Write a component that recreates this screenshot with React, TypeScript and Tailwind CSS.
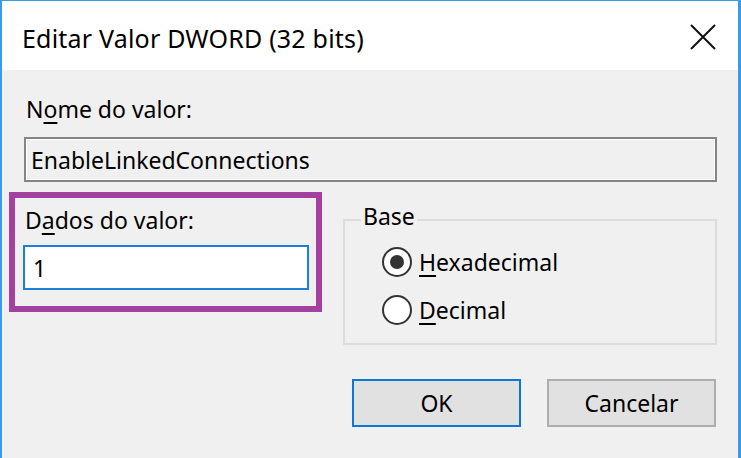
export default function App() {
  return (
    <div className="w-[741px] h-[458px] overflow-hidden bg-[#f0f0f0] border-[#3c9be8] border-l-[2px] border-r-[3px] border-t-[1px] flex flex-col text-black font-['Noto_Sans',sans-serif]">
      {/* Title bar */}
      <div className="h-[69px] bg-white flex items-center justify-between pl-[20px] pr-[22px] shrink-0">
        <span className="text-[25px] leading-[32px] mt-[4px] tracking-[0.2px]">Editar Valor DWORD (32 bits)</span>
        <svg width="26" height="26" viewBox="0 0 26 26" className="mt-[2px]">
          <path d="M1 1 L25 25 M25 1 L1 25" stroke="#111" strokeWidth="2" />
        </svg>
      </div>

      {/* Body */}
      <div className="flex flex-col pl-[22px] pr-[21px] text-[23px] leading-[32px]">
        <div className="mt-[23px] h-[32px] pl-[2px]">
          N<span className="underline underline-offset-[4px]">o</span>me do valor:
        </div>
        <div className="mt-[12px] h-[45px] border-2 border-[#858585] shadow-[inset_0_0_0_1px_#ffffff] bg-[#f0f0f0] flex items-center pl-[5px]">
          EnableLinkedConnections
        </div>

        <div className="mt-[10px] flex">
          {/* Value data (highlighted) */}
          <div className="-ml-[15px] w-[313px] h-[120px] border-[6px] border-[#a2419f] pl-[8px] pr-[7px] pt-[6px] flex flex-col">
            <div className="h-[32px] pl-[2px]">
              D<span className="underline underline-offset-[4px]">a</span>dos do valor:
            </div>
            <div className="mt-[9px] h-[45px] border-2 border-[#1e7fd8] bg-white flex items-center pl-[8px]">
              1
            </div>
          </div>

          {/* Base group */}
          <div className="relative ml-[21px] mt-[27px] w-[374px] h-[126px] border-2 border-[#dcdcdc]">
            <span className="absolute left-[16px] -top-[21px] px-[2px] bg-[#f0f0f0]">Base</span>
            <div className="flex flex-col pl-[37px] pt-[26px] gap-[18px]">
              <div className="flex items-center gap-[7px]">
                <span className="w-[30px] h-[30px] rounded-full border-[2px] border-[#333] bg-white flex items-center justify-center">
                  <span className="w-[14px] h-[14px] rounded-full bg-[#333]" />
                </span>
                <span className="leading-[30px]">
                  <span className="underline underline-offset-[4px]">H</span>exadecimal
                </span>
              </div>
              <div className="flex items-center gap-[7px]">
                <span className="w-[30px] h-[30px] rounded-full border-[2px] border-[#333] bg-white" />
                <span className="leading-[30px]">
                  <span className="underline underline-offset-[4px]">D</span>ecimal
                </span>
              </div>
            </div>
          </div>
        </div>

        {/* Buttons */}
        <div className="mt-[34px] flex justify-end gap-[26px] pr-[1px]">
          <button className="w-[169px] h-[48px] border-2 border-[#0a78d7] bg-[#e1e1e1] flex items-center justify-center">
            OK
          </button>
          <button className="w-[169px] h-[48px] border-2 border-[#adadad] bg-[#e1e1e1] flex items-center justify-center">
            Cancelar
          </button>
        </div>
      </div>
    </div>
  )
}
